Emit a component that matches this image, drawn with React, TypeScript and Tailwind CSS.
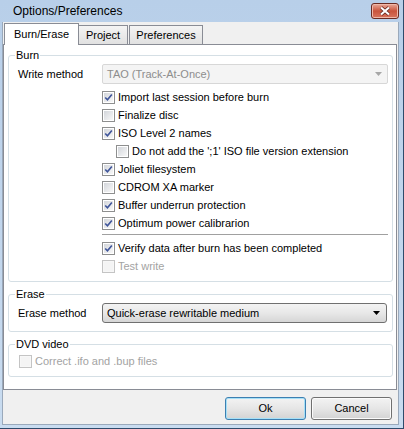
import clsx from 'clsx'

const Check = (props: { checked?: boolean; disabled?: boolean }) => (
	<span
		className={clsx(
			'flex h-[13px] w-[13px] shrink-0 items-center justify-center border p-px',
			props.disabled ? 'border-[#c4c4c4] bg-[#f7f7f7]' : 'border-[#8e8f8f] bg-white',
		)}
	>
		<span
			className={clsx(
				'flex h-full w-full items-center justify-center',
				props.disabled ? 'bg-[#f4f4f4]' : 'bg-linear-to-br from-[#d3d6db] to-[#f8f8f8]',
			)}
		>
			{props.checked && (
				<svg width="11" height="11" viewBox="0 0 11 11">
					<path d="M1.5 5.5 L4.2 8.3 L9.6 1.8" fill="none" stroke="#3f559a" strokeWidth="2" />
				</svg>
			)}
		</span>
	</span>
)

const Row = (props: { label: string; checked?: boolean; disabled?: boolean; indent?: boolean }) => (
	<div className={clsx('flex h-[18px] items-center gap-[3px]', props.indent && 'pl-[14px]')}>
		<Check checked={props.checked} disabled={props.disabled} />
		<span className={clsx(props.disabled && 'text-[#a3a3a3]')}>{props.label}</span>
	</div>
)

const Arrow = (props: { color: string }) => (
	<svg width="7" height="4" viewBox="0 0 7 4">
		<path d="M0 0 H7 L3.5 4 Z" fill={props.color} />
	</svg>
)

const Group = (props: { title: string; className?: string; children: React.ReactNode }) => (
	<fieldset className={clsx('rounded-[3px] border border-[#d5dfe5]', props.className)}>
		<legend className="ml-[6px] px-px leading-[13px]">{props.title}</legend>
		{props.children}
	</fieldset>
)

const Button = (props: { label: string; focused?: boolean }) => (
	<button
		className={clsx(
			'h-[23px] w-[81px] rounded-[3px] border bg-linear-to-b from-[#f3f3f3] via-[#e6e6e6] to-[#d3d3d3]',
			props.focused
				? 'border-[#3c7fb1] shadow-[inset_0_0_0_1px_#a6e0f7]'
				: 'border-[#707070] shadow-[inset_0_0_0_1px_#fbfbfb]',
		)}
	>
		{props.label}
	</button>
)

export default function App() {
	return (
		<div className="flex h-[429px] w-[404px] flex-col border-r border-b border-[#2e4b6b] bg-linear-to-b from-[#b8cfe9] to-[#c9dcf0] pr-[4px] pb-[3px] pl-[2px] font-['Liberation_Sans',Arial,sans-serif] text-[11px] leading-[13px] text-black">
			<div className="flex h-[22px] shrink-0 items-center justify-between pl-[11px]">
				<span className="text-[12px]">Options/Preferences</span>
				<span className="flex h-[16px] w-[28px] items-center justify-center rounded-[3px] border border-[#6b2b22] bg-linear-to-b from-[#e7a99a] via-[#c9533b] to-[#d8735d] shadow-[inset_0_0_0_1px_#f0b8a8]">
					<svg width="12" height="10" viewBox="0 0 12 10">
						<path d="M2 1.5 L10 8.5 M10 1.5 L2 8.5" stroke="#5a2018" strokeWidth="3.6" />
						<path d="M2 1.5 L10 8.5 M10 1.5 L2 8.5" stroke="#ffffff" strokeWidth="2.2" />
					</svg>
				</span>
			</div>

			<div className="flex flex-1 flex-col border-r border-b border-l border-[#9aa9bb] bg-[#f0f0f0]">
				<div className="mt-px flex h-[22px] items-end pl-px">
					<div className="relative z-10 flex h-[22px] w-[75px] items-center justify-center border-t border-r border-l border-[#898c95] bg-white">
						Burn/Erase
					</div>
					<div className="-ml-px flex h-[20px] w-[50px] items-center justify-center border border-[#898c95] bg-linear-to-b from-[#f4f4f4] to-[#e1e1e1]">
						Project
					</div>
					<div className="ml-px flex h-[20px] w-[74px] items-center justify-center border border-[#898c95] bg-linear-to-b from-[#f4f4f4] to-[#e1e1e1]">
						Preferences
					</div>
				</div>

				<div className="-mt-px mr-px flex h-[346px] flex-col border border-[#898c95] bg-white pt-[4px] pr-[3px] pl-[4px]">
					<Group title="Burn">
						<div className="flex flex-col pt-[2px] pr-[4px] pb-[6px] pl-[9px]">
							<div className="flex items-center">
								<span className="w-[84px]">Write method</span>
								<div className="flex h-[20px] flex-1 items-center justify-between rounded-[2px] border border-[#d7d7d7] bg-[#f4f4f4] pr-[5px] pl-[4px] text-[#8d8d8d]">
									<span>TAO (Track-At-Once)</span>
									<Arrow color="#a7a7a7" />
								</div>
							</div>
							<div className="mt-[4px] flex flex-col pl-[84px]">
								<Row label="Import last session before burn" checked />
								<Row label="Finalize disc" />
								<Row label="ISO Level 2 names" checked />
								<Row label="Do not add the ';1' ISO file version extension" indent />
								<Row label="Joliet filesystem" checked />
								<Row label="CDROM XA marker" />
								<Row label="Buffer underrun protection" checked />
								<Row label="Optimum power calibrarion" checked />
								<div className="mt-[2px] mb-[4px] h-px bg-[#a0a0a0]" />
								<Row label="Verify data after burn has been completed" checked />
								<Row label="Test write" disabled />
							</div>
						</div>
					</Group>

					<Group title="Erase" className="mt-[6px]">
						<div className="flex items-center pt-[2px] pr-[5px] pb-[8px] pl-[9px]">
							<span className="w-[84px]">Erase method</span>
							<div className="flex h-[20px] flex-1 items-center justify-between rounded-[3px] border border-[#707070] bg-linear-to-b from-[#f3f3f3] via-[#e8e8e8] to-[#d6d6d6] pr-[6px] pl-[4px]">
								<span>Quick-erase rewritable medium</span>
								<Arrow color="#000000" />
							</div>
						</div>
					</Group>

					<Group title="DVD video" className="mt-[6px]">
						<div className="pt-px pb-[6px] pl-[10px]">
							<Row label="Correct .ifo and .bup files" disabled />
						</div>
					</Group>
				</div>

				<div className="mt-[7px] flex justify-end gap-[5px] pr-[6px]">
					<Button label="Ok" focused />
					<Button label="Cancel" />
				</div>
			</div>
		</div>
	)
}
